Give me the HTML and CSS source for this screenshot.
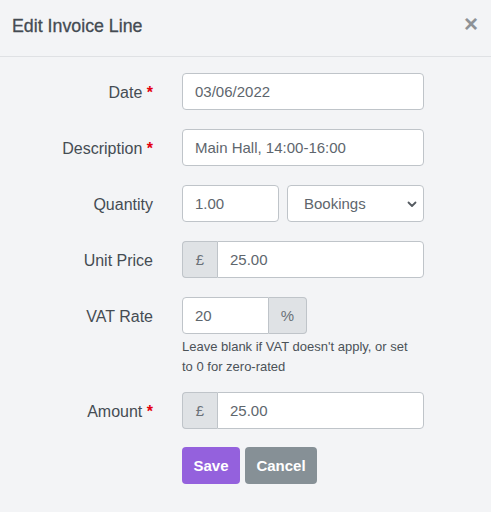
FILE: index.html
```html
<!DOCTYPE html>
<html>
<head>
<meta charset="utf-8">
<link rel="stylesheet" href="styles.css">
</head>
<body>
<div class="modal">
  <div class="modal-header">
    <h5 class="modal-title">Edit Invoice Line</h5>
    <span class="close">&times;</span>
  </div>
  <form class="modal-body">
    <label class="lbl">Date <span class="req">*</span></label>
    <div class="field"><div class="control">03/06/2022</div></div>

    <label class="lbl">Description <span class="req">*</span></label>
    <div class="field"><div class="control">Main Hall, 14:00-16:00</div></div>

    <label class="lbl">Quantity</label>
    <div class="field qty-row">
      <div class="control qty">1.00</div>
      <div class="control select">Bookings
        <svg class="chev" width="10" height="7" viewBox="0 0 10 7"><path d="M1.5 1.5 L5 5 L8.5 1.5" fill="none" stroke="#555b61" stroke-width="1.8" stroke-linecap="round" stroke-linejoin="round"/></svg>
      </div>
    </div>

    <label class="lbl">Unit Price</label>
    <div class="field"><div class="group"><span class="addon pre">£</span><div class="control in-group grow">25.00</div></div></div>

    <label class="lbl">VAT Rate</label>
    <div class="field">
      <div class="group vat"><div class="control in-group-left vat-input">20</div><span class="addon post">%</span></div>
      <p class="help">Leave blank if VAT doesn't apply, or set to 0 for zero-rated</p>
    </div>

    <label class="lbl">Amount <span class="req">*</span></label>
    <div class="field"><div class="group"><span class="addon pre">£</span><div class="control in-group grow">25.00</div></div></div>

    <div></div>
    <div class="field buttons">
      <button type="button" class="btn save">Save</button>
      <button type="button" class="btn cancel">Cancel</button>
    </div>
  </form>
</div>
</body>
</html>
```
FILE: styles.css
```css
html, body {
  margin: 0;
  padding: 0;
  background: #f3f4f6;
  font-family: "Liberation Sans", Arial, sans-serif;
  color: #495057;
}
.modal {
  width: 491px;
  height: 512px;
  background: #f3f4f6;
}
.modal-header {
  height: 57px;
  border-bottom: 1px solid #dfe1e4;
  display: flex;
  align-items: center;
  justify-content: space-between;
  padding: 0 13px 0 12px;
  box-sizing: border-box;
}
.modal-title {
  margin: 0;
  font-size: 17.8px;
  font-weight: 400;
  color: #444b52;
  -webkit-text-stroke: 0.3px #444b52;
  padding-bottom: 4px;
}
.close {
  font-size: 24px;
  font-weight: 700;
  color: #8e9296;
  line-height: 1;
  padding-bottom: 8px;
}
.modal-body {
  display: grid;
  grid-template-columns: 153px 242px;
  column-gap: 29px;
  row-gap: 19px;
  padding-top: 16px;
  margin: 0;
}
.lbl {
  justify-self: end;
  font-size: 16px;
  color: #454c53;
  height: 37px;
  line-height: 37px;
  padding-top: 1px;
  box-sizing: border-box;
}
.req {
  color: #e3000f;
  font-weight: 700;
}
.control {
  box-sizing: border-box;
  height: 37px;
  background: #fff;
  border: 1px solid #bfc4c9;
  border-radius: 4px;
  padding: 0 12px;
  font-size: 15px;
  line-height: 35px;
  color: #5e666d;
}
.qty-row {
  display: flex;
  gap: 8px;
}
.qty { width: 97px; }
.select {
  flex: 1;
  display: flex;
  align-items: center;
  justify-content: space-between;
  padding-left: 16px;
  padding-right: 6px;
}
.chev { margin-top: 1px; }
.group {
  display: flex;
  height: 37px;
}
.addon {
  box-sizing: border-box;
  height: 37px;
  background: #dfe2e5;
  border: 1px solid #bfc4c9;
  font-size: 15px;
  line-height: 35px;
  color: #6a7178;
  text-align: center;
}
.addon.pre {
  width: 35px;
  border-radius: 4px 0 0 4px;
  border-right: none;
}
.addon.post {
  width: 38px;
  border-radius: 0 4px 4px 0;
  border-left: none;
}
.in-group {
  border-radius: 0 4px 4px 0;
  border-left: 1px solid #bfc4c9;
}
.grow { flex: 1; }
.vat { width: 125px; }
.vat-input {
  width: 87px;
  border-radius: 4px 0 0 4px;
}
.help {
  margin: 3px 0 -3px;
  font-size: 13px;
  line-height: 19.5px;
  color: #4b5258;
  width: 236px;
}
.buttons {
  display: flex;
  gap: 5px;
  margin-top: -1px;
}
.btn {
  height: 37px;
  border: none;
  border-radius: 4px;
  color: #fff;
  font-family: "Liberation Sans", Arial, sans-serif;
  font-size: 15px;
  font-weight: 700;
  padding: 0;
}
.save { background: #9461dd; width: 58px; }
.cancel { background: #869096; width: 72px; }
```
